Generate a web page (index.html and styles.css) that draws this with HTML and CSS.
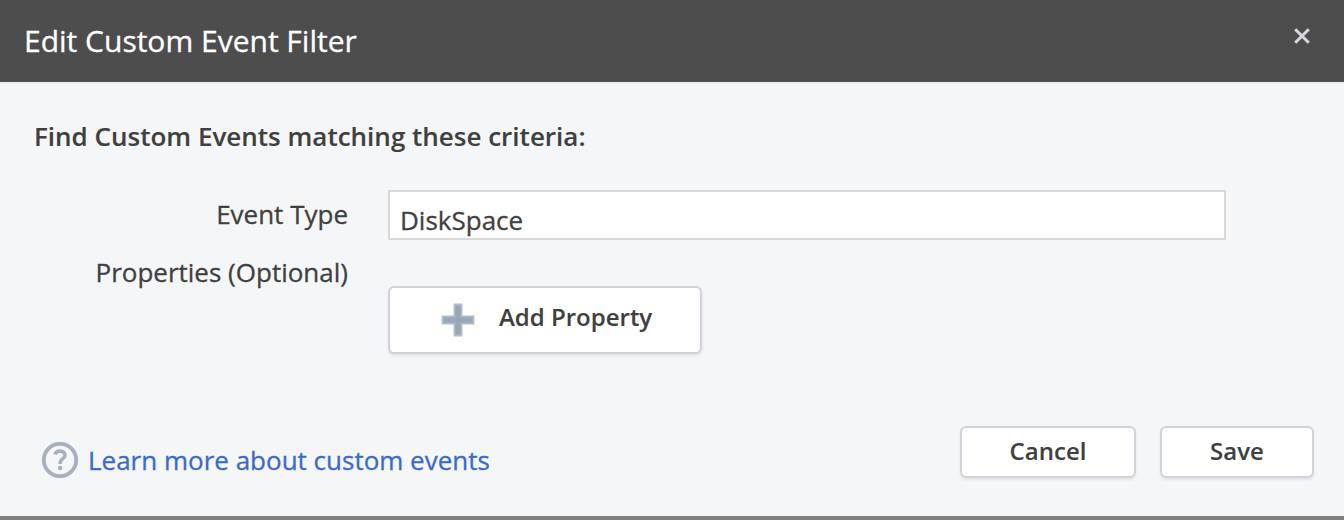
FILE: index.html
```html
<!DOCTYPE html>
<html lang="en">
<head>
<meta charset="utf-8">
<title>Edit Custom Event Filter</title>
<link rel="stylesheet" href="styles.css">
</head>
<body>
<div class="dialog">
  <header class="dialog-header">
    <h1 class="dialog-title"><span>Edit Custom Event Filter</span></h1>
    <button class="close" aria-label="Close">
      <svg width="18" height="18" viewBox="0 0 18 18"><path d="M2.2 2.2 15.8 15.8M15.8 2.2 2.2 15.8" stroke="#d6d8e1" stroke-width="3" fill="none"/></svg>
    </button>
  </header>
  <main class="dialog-body">
    <h2 class="intro"><span>Find Custom Events matching these criteria:</span></h2>
    <div class="form">
      <label class="label"><span>Event Type</span></label>
      <div class="field"><span>DiskSpace</span></div>
      <label class="label label-properties"><span>Properties (Optional)</span></label>
      <button class="btn btn-add">
        <svg width="34" height="34" viewBox="0 0 34 34"><path d="M12.6.6h8.8v12h12v8.8h-12v12h-8.8v-12H.6v-8.8h12z" fill="#b3bccb"/><path d="M14.3 2.5h5.4v11.8h11.8v5.4H19.7v11.8h-5.4V19.7H2.5v-5.4h11.8z" fill="#9ba5b8"/></svg>
        <span>Add Property</span>
      </button>
    </div>
  </main>
  <footer class="dialog-footer">
    <a class="help">
      <svg width="36" height="36" viewBox="0 0 36 36" fill="none" stroke="#a7b1be"><circle cx="18" cy="18" r="16.2" stroke-width="3.8"/><path d="M12.9 12.5C13.6 10.2 15.5 9.1 18 9.1C21 9.1 23 10.8 23 13.2C23 15 22 16 20.4 17.1C18.7 18.3 18.2 19 18.2 21.2V22" stroke-width="3.6"/><circle cx="18.1" cy="26" r="2.3" fill="#a7b1be" stroke="none"/></svg>
      <span>Learn more about custom events</span>
    </a>
    <div class="actions">
      <button class="btn btn-cancel"><span>Cancel</span></button>
      <button class="btn btn-save"><span>Save</span></button>
    </div>
  </footer>
</div>
</body>
</html>
```
FILE: styles.css
```css
* { box-sizing: border-box; }
body { margin: 0; }
.dialog {
  width: 1344px;
  height: 520px;
  display: flex;
  flex-direction: column;
  background: #f4f6f8;
  border-bottom: 4px solid #808080;
  color: #404040;
  font-family: "Open Sans", "Noto Sans", sans-serif;
  font-size: 26px;
  line-height: 36px;
  white-space: nowrap;
  overflow: hidden;
  -webkit-text-stroke: 0.3px currentColor;
}
.dialog-header {
  height: 84px;
  flex: none;
  display: flex;
  justify-content: space-between;
  align-items: flex-start;
  padding: 22px 33px 0 24px;
  background: #4d4d4d;
  background-clip: padding-box;
  border-bottom: 2px solid #ededed;
}
.dialog-title { margin: 1px 0 0; color: #fff; font-size: 30px; font-weight: 400; }
.close { margin: 5px 0 0; padding: 0; border: 0; background: none; line-height: 0; }
.dialog-body { height: 342px; padding: 34px 34px 0; }
.intro { margin: 0; font-size: 26px; font-weight: 600; -webkit-text-stroke-width: 0.1px; }
.form {
  display: grid;
  grid-template-columns: 314px 838px;
  grid-template-rows: 50px 68px;
  column-gap: 40px;
  row-gap: 46px;
  margin-top: 36px;
}
.label { text-align: right; padding-top: 6px; }
.label-properties { margin-top: -38px; }
.field { background: #fff; border: 2px solid #d9d9d9; padding: 10px 10px 0; height: 50px; }
.btn {
  display: flex;
  justify-content: center;
  margin: 0;
  background: #fff;
  border: 2px solid #d0d3d9;
  border-radius: 6px;
  box-shadow: 0 2px 3px rgba(0, 0, 0, .08);
  color: #404040;
  font: 600 24px/36px "Open Sans", "Noto Sans", sans-serif;
  -webkit-text-stroke-width: 0.1px;
}
.btn-add { width: 314px; height: 68px; justify-content: flex-start; gap: 24px; padding: 11px 0 0 51px; }
.btn-add svg { margin-top: 4px; }
.dialog-footer { display: flex; justify-content: space-between; padding: 0 30px 0 42px; }
.help { display: flex; gap: 10px; color: #3b6bcc; padding-top: 16px; }
.actions { display: flex; gap: 24px; }
.btn-cancel, .btn-save { height: 52px; padding: 5px 0 0; }
.btn-cancel { width: 176px; }
.btn-save { width: 154px; }
```
